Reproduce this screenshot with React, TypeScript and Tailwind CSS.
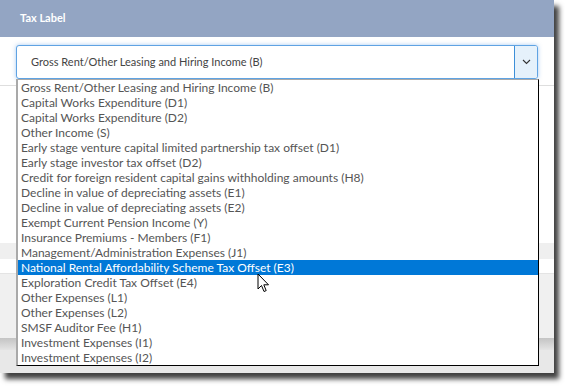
import React from 'react';

const options = [
  'Gross Rent/Other Leasing and Hiring Income (B)',
  'Capital Works Expenditure (D1)',
  'Capital Works Expenditure (D2)',
  'Other Income (S)',
  'Early stage venture capital limited partnership tax offset (D1)',
  'Early stage investor tax offset (D2)',
  'Credit for foreign resident capital gains withholding amounts (H8)',
  'Decline in value of depreciating assets (E1)',
  'Decline in value of depreciating assets (E2)',
  'Exempt Current Pension Income (Y)',
  'Insurance Premiums - Members (F1)',
  'Management/Administration Expenses (J1)',
  'National Rental Affordability Scheme Tax Offset (E3)',
  'Exploration Credit Tax Offset (E4)',
  'Other Expenses (L1)',
  'Other Expenses (L2)',
  'SMSF Auditor Fee (H1)',
  'Investment Expenses (I1)',
  'Investment Expenses (I2)',
];

const selectedIndex = 12;

const App: React.FC = () => {
  return (
    <div className="w-[565px] h-[390px] bg-white overflow-hidden font-['Lato','Liberation_Sans',sans-serif]">
      <div className="relative w-[554px] h-[373px] bg-white flex flex-col shadow-[5px_6px_5px_rgba(0,0,0,0.75)]">
        {/* header */}
        <div className="h-[37px] bg-[#93a5c3] flex items-center px-[20px] shrink-0">
          <span className="text-white text-[11px] font-bold">Tax Label</span>
        </div>

        {/* select row */}
        <div className="h-[49px] border-b border-[#dedede] px-[16px] pt-[8px] shrink-0">
          <div className="h-[34px] flex rounded-[3px] border border-[#5fa3e3] shadow-[0_0_4px_rgba(80,150,230,0.5)] bg-white">
            <div className="flex-1 flex items-center pl-[14px] text-[11px] text-[#444]">
              Gross Rent/Other Leasing and Hiring Income (B)
            </div>
            <div className="w-[23px] flex items-center justify-center bg-[#e5f1fb] border-l border-[#3c8fd8] rounded-r-[2px]">
              <svg width="9" height="6" viewBox="0 0 9 6">
                <path d="M1 1 L4.5 4.5 L8 1" fill="none" stroke="#333" strokeWidth="1.1" />
              </svg>
            </div>
          </div>
        </div>

        {/* page rows behind the list */}
        <div className="h-[157px] bg-white shrink-0" />
        <div className="h-[16px] bg-[#efefef] shrink-0" />
        <div className="h-[15px] bg-white border-b border-[#e4e4e4] shrink-0" />
        <div className="h-[64px] bg-[#f0f0f0] shrink-0" />
        <div className="h-[12px] bg-gradient-to-b from-[#c4c4c4] to-[#e4e4e4] shrink-0" />
        <div className="flex-1 bg-[#e8e8e8]" />

        {/* open dropdown list */}
        <div className="absolute left-[16px] top-[79px] w-[523px] bg-white border-l-2 border-t border-l-[#a9a9a9] border-t-[#a9a9a9] border-r border-b border-r-black border-b-black">
          {options.map((opt, i) => (
            <div
              key={opt}
              className={`h-[15px] leading-[15px] pl-[3px] text-[12px] whitespace-nowrap ${
                i === selectedIndex ? 'bg-[#0078d7] text-white' : 'text-[#555]'
              }`}
            >
              {opt}
            </div>
          ))}
        </div>

        {/* mouse pointer */}
        <svg className="absolute left-[257px] top-[273px]" width="13" height="20" viewBox="0 0 13 20">
          <path d="M1 1 L1 16 L4.5 12.5 L7 18.5 L9.2 17.6 L6.8 11.8 L11.5 11.8 Z" fill="#fff" stroke="#000" strokeWidth="1" strokeLinejoin="round" />
        </svg>
      </div>
    </div>
  );
};

export default App;
